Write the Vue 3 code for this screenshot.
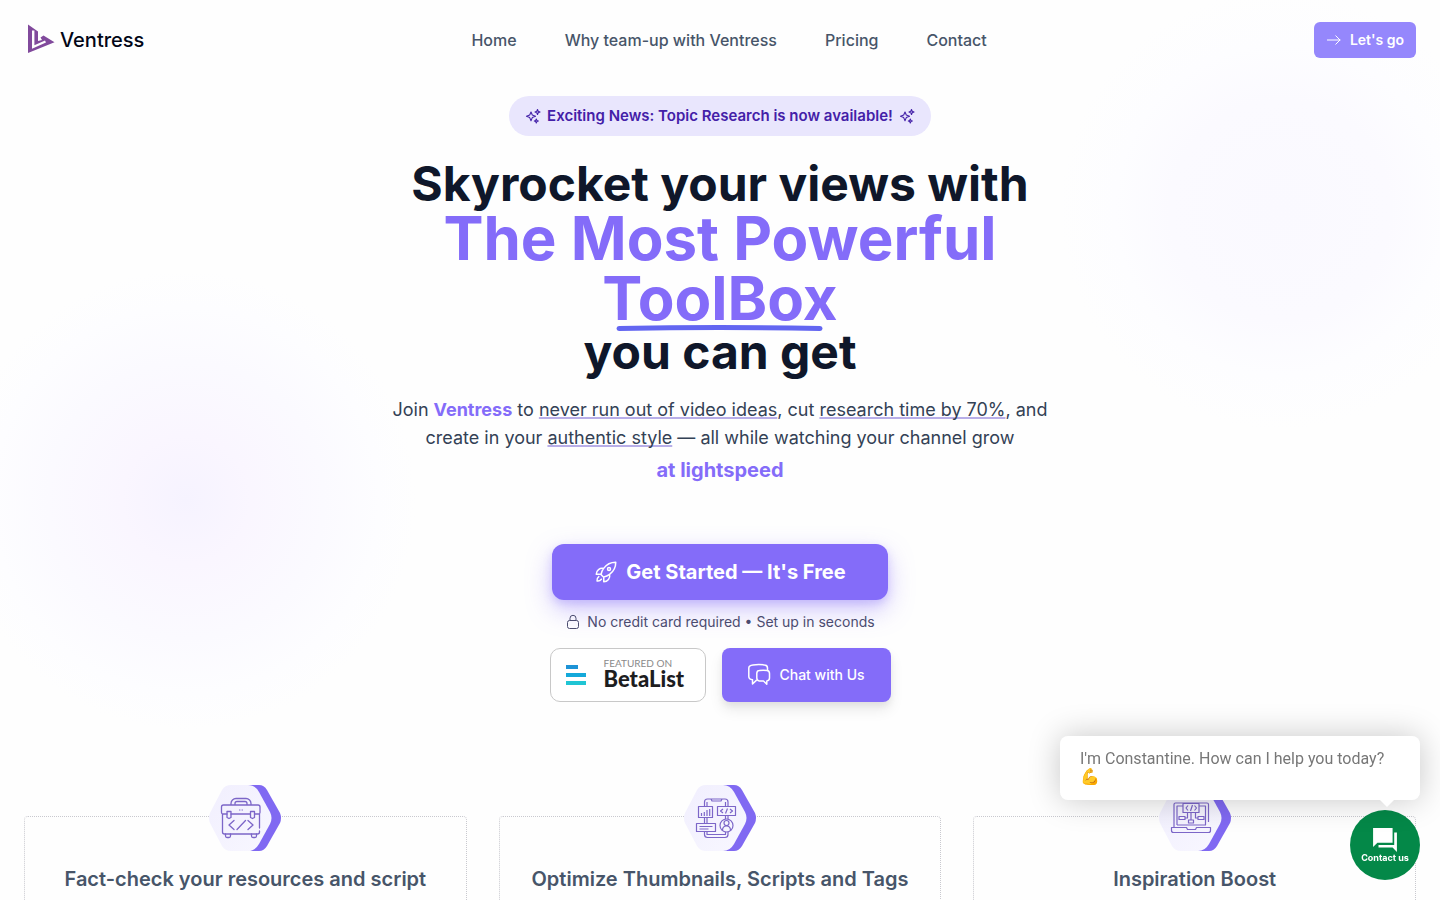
<script setup>
const links = ['Home', 'Why team-up with Ventress', 'Pricing', 'Contact']
const features = [
  { title: 'Fact-check your resources and script', icon: 'toolbox' },
  { title: 'Optimize Thumbnails, Scripts and Tags', icon: 'phone' },
  { title: 'Inspiration Boost', icon: 'laptop' },
]
</script>

<template>
  <div class="page">
    <div class="glow glow-left" aria-hidden="true"></div>
    <div class="glow glow-right" aria-hidden="true"></div>

    <header class="header">
      <a class="brand" href="#">
        <svg width="36" height="36" viewBox="0 0 36 36" aria-hidden="true">
          <path fill="#814a9c" d="M4 2.500 14 9.500V19L18 18 16.500 15.500 19.500 13.500 30.500 20.300 4 31Z" />
          <path fill="none" stroke="#fefefe" stroke-width="2.400" d="M9.200 8.500V25L21.500 19.500" />
        </svg>
        <span>Ventress</span>
      </a>
      <nav class="nav">
        <a v-for="link in links" :key="link" href="#">{{ link }}</a>
      </nav>
      <a class="go" href="#">
        <svg width="16" height="16" viewBox="0 0 16 16" fill="none" stroke="currentColor" stroke-width="1" aria-hidden="true">
          <path d="M1 8H14.500M9.500 3.500 14 8 9.500 12.500" />
        </svg>
        Let's go
      </a>
    </header>

    <main>
      <section class="hero">
        <p class="news">
          <svg v-for="n in 2" :key="n" :class="'spark-' + n" width="16" height="16" viewBox="0 0 16 16" fill="none" stroke="currentColor" stroke-width="1.100" stroke-linejoin="round" aria-hidden="true">
            <path d="M6 4 7.300 7 10.500 8.300 7.300 9.600 6 12.800 4.700 9.600 1.500 8.300 4.700 7ZM12.500 1.500 13.200 3.300 15 4 13.200 4.700 12.500 6.500 11.800 4.700 10 4 11.800 3.300ZM11.300 11 11.900 12.400 13.300 13 11.900 13.600 11.300 15 10.700 13.600 9.300 13 10.700 12.400Z" />
          </svg>
          <span>Exciting News: Topic Research is now available!</span>
        </p>

        <h1 class="title">
          Skyrocket your views with
          <span class="accent">The Most Powerful <span class="marked">ToolBox<svg viewBox="0 0 206 8" preserveAspectRatio="none" aria-hidden="true"><path d="M3 4.500Q103 2.500 203 4.500" fill="none" stroke="#6366f1" stroke-width="5" stroke-linecap="round" /></svg></span></span>
          you can get
        </h1>

        <p class="lead">
          Join <strong>Ventress</strong> to <u>never run out of video ideas</u>, cut <u>research time by 70%</u>, and create in your <u>authentic style</u> — all while watching your channel grow
        </p>
        <p class="speed">at lightspeed</p>

        <a class="cta" href="#">
          <svg width="24" height="24" viewBox="0 0 24 24" fill="none" stroke="currentColor" stroke-width="1.500" stroke-linecap="round" stroke-linejoin="round" aria-hidden="true">
            <path d="M15.590 14.370a6 6 0 0 1-5.840 7.380v-4.800m5.840-2.580a14.980 14.980 0 0 0 6.160-12.120A14.980 14.980 0 0 0 9.631 8.410m5.960 5.960a14.926 14.926 0 0 1-5.841 2.580m-.119-8.540a6 6 0 0 0-7.381 5.840h4.810m2.570-5.840a14.927 14.927 0 0 0-2.580 5.840m2.699 2.700c-.103.021-.207.041-.311.060a15.090 15.090 0 0 1-2.448-2.448 14.900 14.900 0 0 1 .060-.312m-2.240 2.390a4.493 4.493 0 0 0-1.757 4.306 4.493 4.493 0 0 0 4.306-1.758M16.500 9a1.500 1.500 0 1 1-3 0 1.500 1.500 0 0 1 3 0Z" />
          </svg>
          Get Started — It's Free
        </a>

        <p class="note">
          <svg width="16" height="16" viewBox="0 0 16 16" fill="none" stroke="currentColor" stroke-width="1" aria-hidden="true">
            <rect x="2.500" y="6.500" width="11" height="8" rx="2" />
            <path d="M5 6.500V4.300a3 3 0 0 1 6 0v2.200" />
          </svg>
          No credit card required • Set up in seconds
        </p>

        <div class="actions">
          <a class="beta" href="#">
            <svg width="20" height="20" viewBox="0 0 20 20" aria-hidden="true">
              <path fill="#1e93d6" d="M0 0h12v4H0z" />
              <path fill="#14a9da" d="M0 8h20v4H0z" />
              <path fill="#20c5d4" d="M0 16h20v4H0z" />
            </svg>
            <span class="beta-text"><small>FEATURED ON</small><b>BetaList</b></span>
          </a>
          <button class="chat" type="button">
            <svg width="24" height="24" viewBox="0 0 24 24" fill="none" stroke="currentColor" stroke-width="1.500" stroke-linecap="round" stroke-linejoin="round" aria-hidden="true">
              <path d="M20.500 6.500V5c0-1.800-1.500-3-3-3.100-4-.400-7.500-.400-11.500 0C3.500 2.100 1.800 3 1.800 5v8.500c0 2 1.200 3 3.700 3.200V21l3.800-3.600" />
              <path d="M9.800 10.500c0-2 1-2.900 2.500-3 2.800-.300 5.200-.300 7.700 0 1.700.200 2.500 1.200 2.500 3V15c0 1.800-1 2.800-2.700 3v3.200L16.500 18h-4.200c-1.700-.200-2.500-1.200-2.500-3z" />
            </svg>
            Chat with Us
          </button>
        </div>
      </section>

      <section class="features">
        <article v-for="feature in features" :key="feature.icon" class="card">
          <svg class="hex" width="72" height="66" viewBox="0 0 72 66" fill="none" aria-hidden="true">
            <defs>
              <linearGradient :id="'face-' + feature.icon" x1="0" y1="0" x2="1" y2="1">
                <stop offset="0" stop-color="#f1effe" />
                <stop offset="1" stop-color="#f8f7ff" />
              </linearGradient>
            </defs>
            <path fill="#8069f2" d="M30 0H50Q55 0 58 5L71 28Q73 33 71 38L58 61Q55 66 50 66H30Z" />
            <path :fill="'url(#face-' + feature.icon + ')'" d="M22 0H39Q46 0 50 7L61 27Q64 33 61 39L50 59Q46 66 39 66H22Q16 66 13 61L1 38Q-1 33 1 28L13 5Q16 0 22 0Z" />
            <g v-if="feature.icon === 'toolbox'" stroke="#7c66c8" stroke-width="1.300" stroke-linejoin="round" stroke-linecap="round">
              <path d="M18 29H14a1.500 1.500 0 0 1-1.500-1.500V22a2 2 0 0 1 2-2H49a2 2 0 0 1 2 2V27.500A1.500 1.500 0 0 1 49.500 29H45.500M22 29H41.500M13.500 29V47a2 2 0 0 0 2 2H48.500a2 2 0 0 0 2-2V46M50.500 43V29M22 20V18.500a5 5 0 0 1 5-5h10a5 5 0 0 1 5 5V20M26 20V18.500a2 2 0 0 1 2-2h8a2 2 0 0 1 2 2V20" />
              <path stroke-width="1" d="M30.500 25h.5m2 0h.5" />
              <path d="M18 26.500h4v6l-2 1-2-1ZM41.500 26.500h4v6l-2 1-2-1ZM16.500 49v2a1.500 1.500 0 0 0 1.500 1.500h2a1.500 1.500 0 0 0 1.500-1.500V49M42.500 49v2a1.500 1.500 0 0 0 1.500 1.500h2a1.500 1.500 0 0 0 1.500-1.500V49M25 35.500 20 40l5 4.500M39 35.500l5 4.500-5 4.500M36.500 35.500l-8.500 9" />
            </g>
            <g v-else-if="feature.icon === 'phone'" stroke="#7c66c8" stroke-width="1.200" stroke-linejoin="round">
              <path d="M20.500 21v-4a3 3 0 0 1 3-3H41a3 3 0 0 1 3 3v4M23 21v-4M41.500 17v4M27 14l1 2h9l1-2M20.500 33v5M23 33v5M44 31v3M41.500 31v3M20.500 47v2.500a3 3 0 0 0 3 3H41a3 3 0 0 0 3-3V47M23 47v2.500h18.500V47" />
              <path d="M14.500 21.500h14v11h-14zM33.500 21.500h18v9h-18zM12.500 38.500h19v8h-19zM15.500 41.500h13M15.500 44h9M17.500 31v-3M20.300 31v-4M23 31v-6M25.700 31v-7M39 24l-2.500 2 2.500 2M46 24l2.500 2-2.500 2M43.500 23.500l-2 5" />
              <circle cx="42.500" cy="40.500" r="6.500" /><circle cx="42.500" cy="38" r="2.500" />
              <path d="M38.500 45.500c0-6 8-6 8 0" />
            </g>
            <g v-else stroke="#7c66c8" stroke-width="1.200" stroke-linejoin="round">
              <path d="M15 42V19.500a1.500 1.500 0 0 1 1.500-1.500H48a1.500 1.500 0 0 1 1.500 1.500V37M18 40V21h6M40 21h6.500V40H18M12.500 42.500h15l1 2h8l1-2h14v3a2 2 0 0 1-2 2h-35a2 2 0 0 1-2-2z" />
              <path d="M24 18.500h16v9H24zM29 20.500 27 23l2 2.500M35.500 20.500l2 2.500-2 2.500M33.500 20l-2 6M32 27.500V35M29.500 35h5v3h-5zM20 31.500h6v3h-6zM39 31.500h6v3h-6zM26 33h2.500v-5.500M39 33h-2.500v-5.500" />
            </g>
          </svg>
          <h2>{{ feature.title }}</h2>
        </article>
      </section>
    </main>

    <aside class="widget">
      <p class="bubble">I'm Constantine. How can I help you today? 💪</p>
      <button class="contact" type="button">
        <svg width="26" height="26" viewBox="0 0 24 24" fill="currentColor" aria-hidden="true">
          <path d="M1 1H19V14.500H5L1 18.500ZM20.500 5H23V23L19 19H6V16.500H20.500Z" />
        </svg>
        Contact us
      </button>
    </aside>
  </div>
</template>

<style>
body {
  margin: 0;
  background: #fefefe;
}
</style>

<style scoped>
.page {
  position: relative;
  height: 100vh;
  overflow: hidden;
  font-family: Inter, 'Liberation Sans', sans-serif;
  color: #0f172a;
}
a {
  color: inherit;
  text-decoration: none;
}
p, h1, h2 {
  margin: 0;
}
svg {
  display: block;
  flex: none;
}
.glow {
  position: absolute;
  border-radius: 50%;
}
.glow-left {
  left: -44px;
  top: 270px;
  width: 460px;
  height: 460px;
  background: radial-gradient(closest-side, #f6f3ff 0%, #faf6ff 28%, #fbfaff 60%, #fdfdff 84%, #fefefe 100%);
}
.glow-right {
  right: -60px;
  top: -10px;
  width: 440px;
  height: 440px;
  background: radial-gradient(closest-side, #faf9ff 0%, #fbfaff 50%, #fdfdff 75%, #fefefe 100%);
}
.header {
  position: relative;
  display: flex;
  align-items: center;
  justify-content: space-between;
  height: 80px;
  padding: 0 24px;
}
.brand {
  display: flex;
  align-items: center;
  font-size: 20px;
  font-weight: 500;
  line-height: 28px;
  color: #020617;
}
.nav {
  display: flex;
  gap: 48px;
  font-size: 16px;
  font-weight: 500;
  line-height: 24px;
  color: #475569;
}
.go {
  display: flex;
  align-items: center;
  gap: 8px;
  padding: 8px 12px;
  border-radius: 6px;
  background: #9587fc;
  color: #fff;
  font-size: 14px;
  font-weight: 600;
  line-height: 20px;
}
.hero {
  position: relative;
  display: flex;
  flex-direction: column;
  align-items: center;
  padding: 16px 24px 0;
  text-align: center;
}
.news {
  display: flex;
  align-items: center;
  gap: 6px;
  padding: 10px 16px;
  border-radius: 20px;
  background: #e9e6fd;
  color: #4320a8;
  font-size: 15px;
  font-weight: 600;
  line-height: 20px;
}
.spark-2 {
  order: 2;
}
.title {
  max-width: 672px;
  margin-top: 24px;
  font-size: 48px;
  font-weight: 700;
  line-height: 48px;
}
.accent {
  display: block;
  font-size: 60px;
  line-height: 60px;
  color: #846cf9;
}
.marked {
  position: relative;
  display: inline-block;
}
.marked svg {
  position: absolute;
  left: 6%;
  bottom: -4px;
  width: 88%;
  height: 8px;
}
.lead {
  max-width: 672px;
  margin-top: 20px;
  font-size: 18px;
  line-height: 28px;
  color: #334155;
}
.lead strong {
  color: #846cf9;
}
.lead u {
  text-decoration-color: #b8aee8;
  text-decoration-thickness: 2px;
  text-underline-offset: 1px;
  text-decoration-skip-ink: none;
}
.speed {
  margin-top: 4px;
  font-size: 20px;
  font-weight: 700;
  line-height: 28px;
  color: #846cf9;
}
.cta {
  display: flex;
  align-items: center;
  justify-content: center;
  gap: 8px;
  height: 56px;
  margin-top: 60px;
  padding: 0 42px;
  border-radius: 12px;
  background: #846cf9;
  box-shadow: 0 10px 26px rgba(132, 108, 249, 0.36), 0 4px 8px rgba(132, 108, 249, 0.26);
  color: #fff;
  font-size: 20px;
  font-weight: 700;
}
.note {
  display: flex;
  align-items: center;
  gap: 6px;
  margin-top: 12px;
  font-size: 14px;
  line-height: 20px;
  color: #4b4c70;
}
.actions {
  display: flex;
  gap: 16px;
  margin-top: 16px;
}
.beta {
  display: flex;
  align-items: center;
  gap: 18px;
  box-sizing: border-box;
  width: 156px;
  height: 54px;
  padding-left: 15px;
  border: 1px solid #c8c8c8;
  border-radius: 10px;
  background: #fff;
  font-family: Lato, sans-serif;
  text-align: left;
}
.beta-text {
  display: flex;
  flex-direction: column;
  padding-bottom: 2px;
}
.beta small {
  font-size: 10px;
  line-height: 10px;
  color: #8a8a8a;
}
.beta b {
  font-size: 22px;
  font-weight: 900;
  line-height: 22px;
  color: #1d1d1f;
}
.chat {
  display: flex;
  align-items: center;
  justify-content: center;
  gap: 8px;
  min-width: 169px;
  height: 54px;
  padding: 0 24px;
  border: 0;
  border-radius: 8px;
  background: #846cf9;
  box-shadow: 0 8px 14px rgba(0, 0, 0, 0.08), 0 4px 6px rgba(0, 0, 0, 0.05);
  color: #fff;
  font: 500 14px/20px Inter, sans-serif;
}
.features {
  position: relative;
  display: grid;
  grid-template-columns: repeat(3, minmax(0, 1fr));
  gap: 32px;
  padding: 114px 24px 0;
}
.card {
  position: relative;
  padding: 48px 16px 72px;
  border: 1px dotted #c9c9cf;
  border-radius: 4px;
  text-align: center;
}
.hex {
  position: absolute;
  top: -32px;
  left: calc(50% - 36px);
}
.card h2 {
  font-size: 20px;
  font-weight: 600;
  line-height: 28px;
  color: #475569;
}
.widget {
  position: fixed;
  right: 20px;
  bottom: 20px;
  display: flex;
  flex-direction: column;
  align-items: flex-end;
  gap: 10px;
  font-family: Roboto, sans-serif;
}
.bubble {
  position: relative;
  box-sizing: border-box;
  width: 360px;
  padding: 14px 20px;
  border-radius: 8px;
  background: #fff;
  box-shadow: 0 0 32px rgba(0, 0, 0, 0.22);
  color: #777;
  font-size: 16px;
  line-height: 18px;
}
.bubble::after {
  content: '';
  position: absolute;
  right: 25px;
  bottom: -7px;
  border: 8px solid transparent;
  border-top-color: #fff;
  border-bottom: 0;
}
.contact {
  display: flex;
  flex-direction: column;
  align-items: center;
  justify-content: center;
  width: 70px;
  height: 70px;
  padding: 0;
  border: 0;
  border-radius: 50%;
  background: #048848;
  color: #fff;
  font: 700 9px/10px Inter, sans-serif;
  white-space: nowrap;
}
</style>
